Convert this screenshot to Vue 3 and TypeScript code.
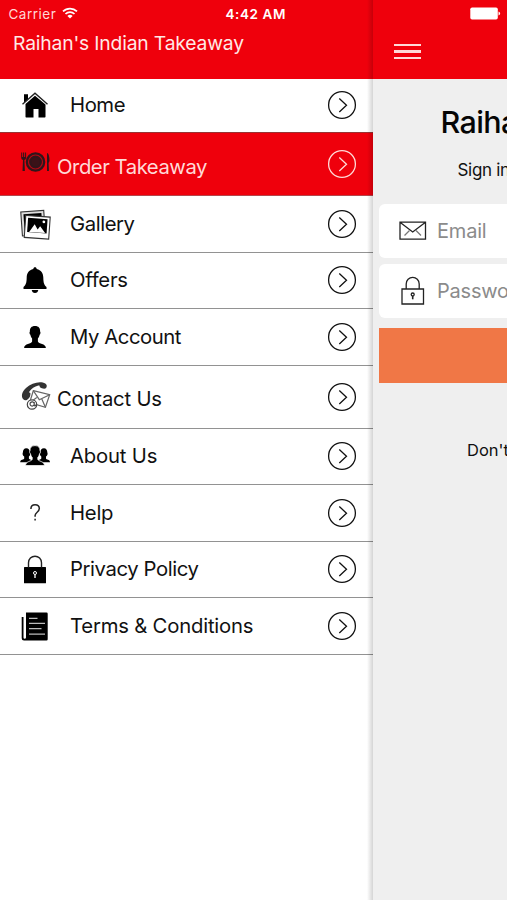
<script setup lang="ts">
interface MenuItem {
  id: string
  label: string
  height: number
  width: number
}

// height: row height in px; width: advance width of the label
const items: MenuItem[] = [
  { id: 'home', label: 'Home', height: 54, width: 55.5 },
  { id: 'order', label: 'Order Takeaway', height: 63, width: 150.5 },
  { id: 'gallery', label: 'Gallery', height: 56.5, width: 65 },
  { id: 'offers', label: 'Offers', height: 56.5, width: 58 },
  { id: 'account', label: 'My Account', height: 57, width: 111.5 },
  { id: 'contact', label: 'Contact Us', height: 62.5, width: 105 },
  { id: 'about', label: 'About Us', height: 56.5, width: 87.5 },
  { id: 'help', label: 'Help', height: 56.5, width: 43.5 },
  { id: 'privacy', label: 'Privacy Policy', height: 56.5, width: 129 },
  { id: 'terms', label: 'Terms & Conditions', height: 57, width: 183.5 },
]
</script>

<template>
  <div class="screen">
    <div class="status">
      <span class="carrier">Carrier</span>
      <svg class="wifi" width="16" height="12" viewBox="0 0 16 12">
        <g fill="none" stroke="#fff" stroke-width="1.7">
          <path d="M1 4.4a10 10 0 0 1 14 0" />
          <path d="M3.5 7a6.4 6.4 0 0 1 9 0" />
        </g>
        <path fill="#fff" d="M8 11.4 5.4 8.9a3.8 3.8 0 0 1 5.2 0z" />
      </svg>
      <span class="clock">4:42 AM</span>
      <svg class="battery" width="31" height="13" viewBox="0 0 31 13">
        <rect width="27.5" height="12" x=".3" y=".5" rx="1.8" fill="#fff" />
        <path d="M28.5 4.5q1.6.4 1.6 2t-1.6 2z" fill="#fff" />
      </svg>
    </div>

    <nav class="menu">
      <header class="menu-head">Raihan's Indian Takeaway</header>
      <ul class="list">
        <li v-for="item in items" :key="item.id" class="row" :class="item.id" :style="{ height: item.height + 'px' }">
          <span class="icon">
            <svg width="32" height="32" viewBox="0 0 32 32">
              <g v-if="item.id === 'home'">
                <path d="M5 5.2h4v5l-4 3.3zM6.500 15 16 6.800 26.500 15.500V27.500c0 .8-.3 1-1 1H19.500v-8.500h-5v8.500H7.500c-.7 0-1-.2-1-1z" />
                <path d="M3.500 15.300 16 4.200l12.500 11" fill="none" stroke="#222" stroke-width="1.400" />
              </g>
              <g v-else-if="item.id === 'order'" fill="#30151a">
                <circle cx="16.500" cy="16" r="9.800" />
                <circle cx="16.500" cy="16" r="7" fill="none" stroke="#b30a14" stroke-width="1.200" />
                <circle cx="16.500" cy="16" r="4.200" fill="#3a1218" />
                <path d="M2.200 6.500v5.300q0 1.800 1.800 2.200l-.5 11h2.400L5.400 14q1.700-.4 1.700-2.200V6.500h-1V11H5.200V6.500H4.100V11H3.200V6.500z" />
                <path d="M28 7q2.300 0 2.500 8l-.9 2 .4 8H28z" />
              </g>
              <g v-else-if="item.id === 'gallery'">
                <g transform="rotate(-4 14 14)">
                  <rect x="2.500" y="3.200" width="23" height="24" fill="#ddd" stroke="#333" stroke-width="1.100" />
                  <rect x="5" y="5.500" width="18" height="17" />
                </g>
                <g transform="rotate(4 19 19)">
                  <rect x="6" y="8.300" width="24.500" height="22" fill="#fff" stroke="#333" stroke-width="1.100" />
                  <rect x="8.500" y="10.500" width="19.500" height="14.300" />
                  <path d="m10.500 24.500 5-8 3.300 5 2.300-3.500 5.400 6.500z" fill="#fff" />
                  <circle cx="24.500" cy="13.500" r="1.400" fill="#fff" />
                </g>
              </g>
              <path
                v-else-if="item.id === 'offers'"
                d="M16 3.200c1 0 1.600.6 1.700 1.700 4.500 1 6.500 4.100 6.600 8.600.1 5.500.9 7.500 3.200 9.500v2H4.500v-2c2.300-2 3.100-4 3.200-9.500.1-4.500 2.100-7.600 6.600-8.600.1-1.100.7-1.700 1.700-1.700zM12.700 26h6.600q-.5 3-3.300 3t-3.300-3z"
              />
              <path
                v-else-if="item.id === 'account'"
                d="M16 5c3.600 0 5.300 2.200 5.100 5.500.8.700.3 2.800-.5 3.200-.3 1.900-1 3-1.700 3.700v3.100c.4 2.400 8 2 8 6.500H5.100c0-4.500 7.600-4.100 8-6.500v-3.100c-.7-.7-1.400-1.800-1.700-3.700-.8-.4-1.300-2.500-.5-3.200C10.700 7.200 12.400 5 16 5z"
              />
              <g v-else-if="item.id === 'contact'">
                <path d="M4.300 20.300c-2.400-3-1.600-7.600 2.700-11.400 5.700-5 14.500-7.500 19.300-4.300 1.700 1.200 1.900 2.700.8 4.500-1.300 1.200-4.300.6-6.400-1 .2-1.200-.2-1.700-1.300-1.500-4 1-7 3.300-9 6-.5.900-.2 1.400 1 1.500.3 2.700-.8 5.400-3.500 6.800-1.400.6-2.600.4-3.600-.6z" fill="#333" />
                <g fill="#fff" stroke="#666" stroke-width="1.200">
                  <path d="m14.300 11.700 16.400 4-4.300 12.600-15.800-4.600z" />
                  <path d="m14.300 11.700 6 9 10.400-5M10.600 23.700l7.200-5.200M26.400 28.300l-3.800-8.800" fill="none" />
                  <circle cx="13" cy="25.500" r="4.700" stroke="#444" />
                  <path d="M15.200 23v3.500q1.300 1 2-1M15.200 25.300a2.100 2.100 0 1 1-.2-1.300" stroke="#444" fill="none" />
                </g>
              </g>
              <g v-else-if="item.id === 'about'">
                <path d="M7.200 8.300c2.500 0 3.700 1.700 3.700 4 .8 2.200.1 3.500-1 4.300v1.800c.7 1.400 3.200.7 3.200 3.800H1.200c0-3 3.800-2.300 4-3.700v-1.900c-1.500-1-2-2.600-1.300-4.300 0-2.300 1.200-4 3.300-4z" />
                <path d="M25 8.300c-2.500 0-3.700 1.700-3.700 4-.8 2.200-.1 3.500 1 4.300v1.800c-.7 1.400-3.200.7-3.200 3.800H31c0-3-3.800-2.300-4-3.700v-1.900c1.500-1 2-2.600 1.300-4.300 0-2.300-1.200-4-3.300-4z" />
                <path
                  stroke="#fff"
                  stroke-width=".8"
                  d="M16 5.600c3.600 0 5.200 2 5 5.200.8.700.3 2.600-.5 3-.3 1.700-.9 2.800-1.700 3.500v2c.5 2.200 6.700 1.800 6.700 6.300h-19c0-4.500 6.200-4.100 6.700-6.300v-2c-.8-.7-1.400-1.800-1.700-3.500-.8-.4-1.300-2.300-.5-3-.2-3.200 1.400-5.200 5-5.200z"
                />
              </g>
              <path
                v-else-if="item.id === 'help'"
                d="M11.900 12c0-2.800 1.600-4.200 4.200-4.200s4.200 1.400 4.200 3.800c0 3.700-4.200 3.600-4.200 7v1.100M16.100 21.700v1.900"
                fill="none"
                stroke="#222"
                stroke-width="1.500"
              />
              <g v-else-if="item.id === 'privacy'">
                <rect x="5" y="14" width="22" height="16.300" rx=".5" />
                <path d="M9.500 14.500V9.700a6.500 6.500 0 0 1 13 0v4.800" fill="none" stroke="#222" stroke-width="1.400" />
                <circle cx="16" cy="20" r="1.500" fill="none" stroke="#fff" />
                <path d="M16 21.500v3.500" stroke="#fff" stroke-width="1.300" />
              </g>
              <g v-else>
                <path d="M7 2.500h20.500q1.200 0 1.200 1.200v25.600q0 1.200-1.200 1.200H5q-2.300 0-2.300-2.300V7H4.500v20.500q0 1.200 1.200 1.200t1.300-1.200z" />
                <path d="M10 8.300h8.500M10 13.300h16M10 18.700h12.500M10 24.200h16" stroke="#bbb" stroke-width="1.200" />
              </g>
            </svg>
          </span>
          <svg class="label" :width="item.width" height="28" overflow="visible">
            <text x="0" y="21" :textLength="item.width" lengthAdjust="spacing">{{ item.label }}</text>
          </svg>
          <svg class="go" width="30" height="30" viewBox="0 0 30 30" fill="none" stroke="currentColor" stroke-width="1.300">
            <circle cx="15" cy="15" r="13.400" />
            <path d="m12.300 8.500 7.200 6.700-7.200 6.700" />
          </svg>
        </li>
      </ul>
    </nav>

    <main class="page">
      <header class="bar"><span class="burger"><i /><i /><i /></span></header>
      <h1>Raihan's Indian Takeaway</h1>
      <p class="sub">Sign in to continue</p>
      <form class="form">
        <div class="field">
          <svg width="28" height="30" viewBox="0 0 28 30" fill="none" stroke="#222" stroke-width="1.300">
            <path d="M1 6.200h25.500v17H1zM1 6.200l12.700 9.800L26.500 6.200" />
            <path d="m5.500 19.500 5-5M22 19.500l-5-5" stroke="#777" />
          </svg>
          <span>Email</span>
        </div>
        <div class="field">
          <svg width="28" height="30" viewBox="0 0 28 30" fill="none" stroke="#222" stroke-width="1.300">
            <path d="M3 13h21.500v15H3zM7.200 13V7.900a6.500 6.500 0 0 1 13 0V13" />
            <circle cx="13.700" cy="18.500" r="1.500" />
            <path d="M13.700 19.800v3.500" stroke-width="1.600" />
          </svg>
          <span>Password</span>
        </div>
        <div class="submit" />
      </form>
      <p class="foot">Don't have an account?</p>
    </main>
  </div>
</template>

<style>
body {
  margin: 0;
  overflow: hidden;
}
</style>

<style scoped>
.screen {
  position: relative;
  display: grid;
  grid-template-columns: 372.5px 134.5px;
  width: 507px;
  height: 900px;
  overflow: hidden;
  font-family: Inter, 'Liberation Sans', sans-serif;
  color: #111;
  white-space: nowrap;
}
.status {
  position: absolute;
  z-index: 3;
  top: 0;
  left: 0;
  display: grid;
  grid-template-columns: 53px 173px 1fr 31px;
  align-items: center;
  box-sizing: border-box;
  width: 507px;
  height: 27px;
  padding: 0 6px 0 8.5px;
  color: #fff;
  font-size: 13.5px;
}
.carrier {
  color: #ffd6d6;
  letter-spacing: 0.5px;
}
.wifi {
  margin-top: -2px;
}
.clock {
  margin-left: -9px;
  font-weight: 600;
  letter-spacing: 0.6px;
}
.menu {
  position: relative;
  z-index: 1;
  height: 900px;
  background: #fff;
}
.menu::after {
  content: '';
  position: absolute;
  inset: 0 0 0 auto;
  width: 6px;
  background: linear-gradient(90deg, transparent, rgba(0, 0, 0, 0.17));
}
.menu-head {
  box-sizing: border-box;
  height: 79px;
  padding: 31px 0 0 13px;
  background: #ef000c;
  color: #ffe9e6;
  font-size: 19.3px;
  line-height: 24px;
  letter-spacing: -0.17px;
}
.list {
  margin: 0;
  padding: 0;
  list-style: none;
}
.row {
  display: flex;
  align-items: center;
  box-sizing: border-box;
  padding: 0 15.5px 0 19px;
  border-bottom: 1.5px solid #929292;
}
.home {
  padding-bottom: 2px;
  border-color: #933;
}
.order {
  background: #ef000c;
  color: #ffdad8;
  border-color: #b5464c;
}
.icon,
.icon svg,
.label {
  display: block;
}
.icon {
  width: 32px;
  height: 32px;
  margin-right: 18.5px;
}
.order .icon,
.contact .icon {
  margin: -4px 6px 0 0;
}
.order .label,
.contact .label {
  margin-top: 5px;
}
.label {
  font-size: 20.3px;
}
.label text {
  fill: currentColor;
}
.go {
  margin-left: auto;
}
.page {
  overflow: hidden;
  background: #efefef;
}
.bar {
  box-sizing: border-box;
  height: 79px;
  padding: 44px 0 0 21px;
  background: #ef000c;
}
.burger {
  display: flex;
  flex-direction: column;
  gap: 4px;
  width: 27px;
}
.burger i {
  height: 2.4px;
  background: #ffd9d7;
}
h1 {
  margin: 24px 0 0 68px;
  color: #050505;
  font-size: 30.5px;
  font-weight: 500;
  line-height: 38px;
  letter-spacing: -0.6px;
}
.sub {
  margin: 18px 0 0 85px;
  font-size: 17px;
  line-height: 22px;
  letter-spacing: -0.3px;
}
.form {
  display: flex;
  flex-direction: column;
  gap: 6px;
  width: 370px;
  margin: 23px 0 0 6px;
}
.field {
  display: flex;
  align-items: center;
  gap: 10px;
  box-sizing: border-box;
  height: 54px;
  padding-left: 20.5px;
  border-radius: 6px;
  background: #fff;
  color: #8b8b8b;
  font-size: 20px;
  letter-spacing: -0.2px;
}
.submit {
  height: 54.5px;
  margin-top: 4px;
  background: #f07746;
}
.foot {
  margin: 56.5px 0 0 94.5px;
  font-size: 16.5px;
  line-height: 22px;
}
</style>
